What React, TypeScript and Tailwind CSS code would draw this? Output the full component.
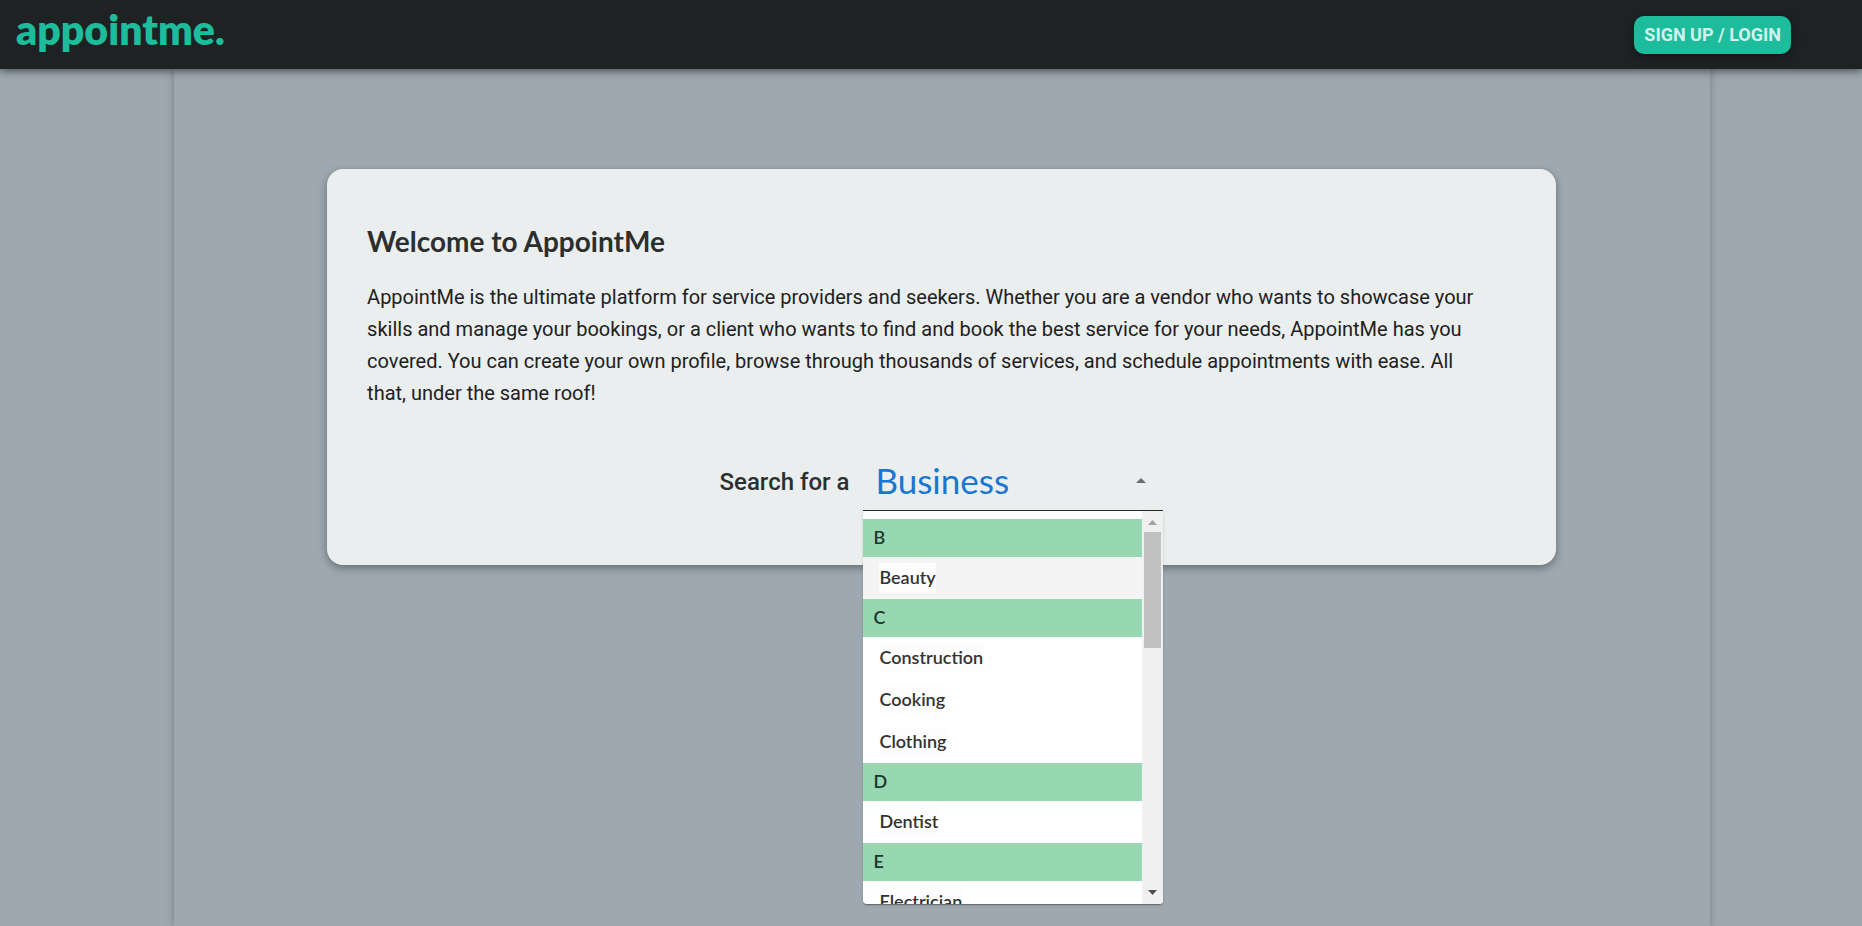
import { useState } from "react";

type Group = { letter: string; items: string[] };

const groups: Group[] = [
  { letter: "B", items: ["Beauty"] },
  { letter: "C", items: ["Construction", "Cooking", "Clothing"] },
  { letter: "D", items: ["Dentist"] },
  { letter: "E", items: ["Electrician"] },
];

function Header() {
  return (
    <header className="relative z-10 flex h-[69px] shrink-0 items-start justify-between bg-[#1f2223] pr-[71px] pl-4 shadow-[0_2px_8px_rgba(0,0,0,0.55)]">
      <a
        href="#home"
        className="font-['Lato',sans-serif] text-[41px] leading-[60px] font-extrabold text-[#1dbc9c]"
      >
        appointme.
      </a>
      <button
        type="button"
        className="mt-4 h-[38px] rounded-[10px] bg-[#1dbc9c] px-2.5 font-['Roboto',sans-serif] text-lg leading-[38px] font-bold text-[#d2f2eb] shadow-[0_3px_8px_rgba(0,0,0,0.35)]"
      >
        SIGN UP / LOGIN
      </button>
    </header>
  );
}

function Scrollbar() {
  return (
    <div className="flex w-[21px] shrink-0 flex-col items-center bg-[#f0f0f0]" aria-hidden="true">
      <svg className="h-[21px] w-full shrink-0" viewBox="0 0 21 21">
        <path d="M6 14h9l-4.5-5z" fill="#a3a3a3" />
      </svg>
      <div className="h-[116px] w-[17px] bg-[#c1c1c1]" />
      <div className="flex-1" />
      <svg className="h-[21px] w-full shrink-0" viewBox="0 0 21 21">
        <path d="M6 7h9l-4.5 5z" fill="#505050" />
      </svg>
    </div>
  );
}

function Options({ onPick }: { onPick: (value: string) => void }) {
  return (
    <div
      id="category-list"
      role="listbox"
      aria-label="Categories"
      className="absolute top-full left-0 z-20 mt-px flex h-[393px] w-full overflow-hidden rounded bg-white shadow-[0_2px_1px_-1px_rgba(0,0,0,0.2),0_1px_1px_rgba(0,0,0,0.14),0_1px_3px_rgba(0,0,0,0.12)]"
    >
      <div className="flex-1 overflow-hidden pt-2 font-['Lato',sans-serif] text-lg font-semibold text-[#333333]">
        {groups.map((group) => (
          <div key={group.letter} role="group" aria-label={group.letter}>
            <div className="h-[38px] bg-[#97d8b2] px-2.5 leading-9 text-[#21352c]">
              {group.letter}
            </div>
            {group.items.map((item) => (
              <button
                key={item}
                type="button"
                role="option"
                aria-selected={item === "Beauty"}
                onClick={() => onPick(item)}
                className="flex h-[42px] w-full items-center px-4 aria-selected:bg-[#f4f4f4]"
              >
                <span className="bg-[#fdfdfd] pb-0.5 leading-7">{item}</span>
              </button>
            ))}
          </div>
        ))}
      </div>
      <Scrollbar />
    </div>
  );
}

function Search() {
  const [value, setValue] = useState("Business");
  return (
    <div className="flex items-center justify-center gap-3.5">
      <label
        htmlFor="category"
        className="font-['Roboto',sans-serif] text-2xl font-medium text-[#2d2f2f]"
      >
        Search for a
      </label>
      <div className="relative flex h-[59px] w-[300px] items-center border-b border-[#2b2b2b] pr-2">
        <input
          id="category"
          type="text"
          role="combobox"
          aria-expanded="true"
          aria-controls="category-list"
          value={value}
          onChange={(event) => setValue(event.target.value)}
          className="min-w-0 flex-1 bg-transparent pb-0.5 pl-3 font-['Lato',sans-serif] text-[35px] leading-[54px] text-[#1976d2] outline-none"
        />
        <button type="button" aria-label="Close" className="flex size-7 items-center justify-center">
          <svg className="size-6" viewBox="0 0 24 24" fill="#6c6f70">
            <path d="M7 14l5-5 5 5z" />
          </svg>
        </button>
        <Options onPick={setValue} />
      </div>
    </div>
  );
}

export default function App() {
  return (
    <div className="flex h-screen flex-col overflow-hidden bg-[#9ea8b0]">
      <Header />
      <main className="flex flex-1 justify-center pl-[21px]">
        <div className="w-full max-w-[1536px] pt-[100px] shadow-[0_0_8px_rgba(0,0,0,0.25)]">
          <section className="mx-auto w-4/5 rounded-2xl bg-[#eaeeee] px-10 pt-[52px] pb-[54px] shadow-[0_3px_8px_rgba(0,0,0,0.35)]">
            <h1 className="font-['Lato',sans-serif] text-[28px] leading-10 font-bold text-[#2d2f2f]">
              Welcome to AppointMe
            </h1>
            <p className="mt-5 pr-6 font-['Roboto',sans-serif] text-xl leading-8 text-[#212121]">
              AppointMe is the ultimate platform for service providers and seekers. Whether you are a
              vendor who wants to showcase your skills and manage your bookings, or a client who wants
              to find and book the best service for your needs, AppointMe has you covered. You can
              create your own profile, browse through thousands of services, and schedule appointments
              with ease. All that, under the same roof!
            </p>
            <div className="mt-[43px]">
              <Search />
            </div>
          </section>
        </div>
      </main>
    </div>
  );
}
